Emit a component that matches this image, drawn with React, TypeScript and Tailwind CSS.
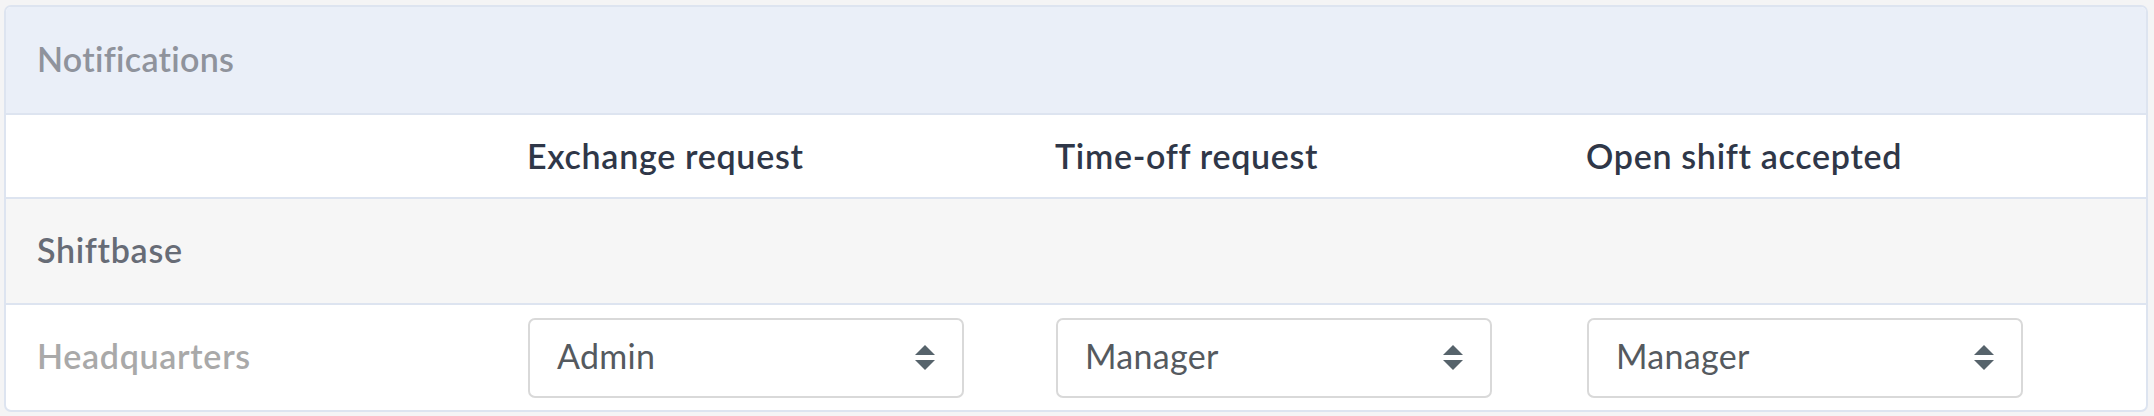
import React from 'react';

const columns = ["Exchange request", "Time-off request", "Open shift accepted"];
const values = ["Admin", "Manager", "Manager"];

function SortArrows() {
    return (
        <svg width="20" height="25" viewBox="0 0 20 25" className="shrink-0">
            <polygon points="10,0 20,10 0,10" fill="#56636b" />
            <polygon points="0,15 20,15 10,25" fill="#56636b" />
        </svg>
    );
}

function RoleSelect({ value }: { value: string }) {
    return (
        <div className="flex items-center justify-between w-[436px] h-[80px] rounded-[7px] border-2 border-[#d9d9d9] bg-white pl-[27px] pr-[27px]">
            <span className="pb-[4px] text-[34px] tracking-[0.3px] text-[#555a5f]">{value}</span>
            <SortArrows />
        </div>
    );
}

export default function App() {
    return (
        <div className="w-[2154px] h-[416px] bg-[#f4f4f5] pt-[5px] pl-[4px] pr-[6px]" style={{ fontFamily: 'Lato, "Noto Sans", sans-serif' }}>
            <div className="rounded-[7px] border-2 border-[#dde4f0] overflow-hidden bg-white">
                {/* Card header */}
                <div className="h-[108px] flex items-center pl-[31px] pb-[4px] bg-[#eaeff8] border-b-2 border-[#dde4f0]">
                    <span className="text-[34px] tracking-[0.3px] font-semibold text-[#8f939c]">Notifications</span>
                </div>

                {/* Column titles */}
                <div className="grid grid-cols-[490px_528px_531px_1fr] h-[84px] pb-[2px] items-center border-b-2 border-[#dde4f0]">
                    <div />
                    {columns.map((col) => (
                        <div key={col} className="pl-[31px] text-[34px] tracking-[0.7px] font-semibold text-[#2f3748]">{col}</div>
                    ))}
                </div>

                {/* Group row */}
                <div className="h-[106px] flex items-center pl-[31px] pb-[4px] bg-[#f6f6f6] border-b-2 border-[#dde4f0]">
                    <span className="text-[34px] tracking-[0.7px] font-semibold text-[#676c76]">Shiftbase</span>
                </div>

                {/* Location row */}
                <div className="grid grid-cols-[490px_528px_531px_1fr] h-[105px] items-center">
                    <div className="pl-[31px] pb-[4px] text-[34px] tracking-[0.7px] font-semibold text-[#a9a9a9]">Headquarters</div>
                    {values.map((v, i) => (
                        <div key={i} className="pl-[32px]">
                            <RoleSelect value={v} />
                        </div>
                    ))}
                </div>
            </div>
        </div>
    );
}
